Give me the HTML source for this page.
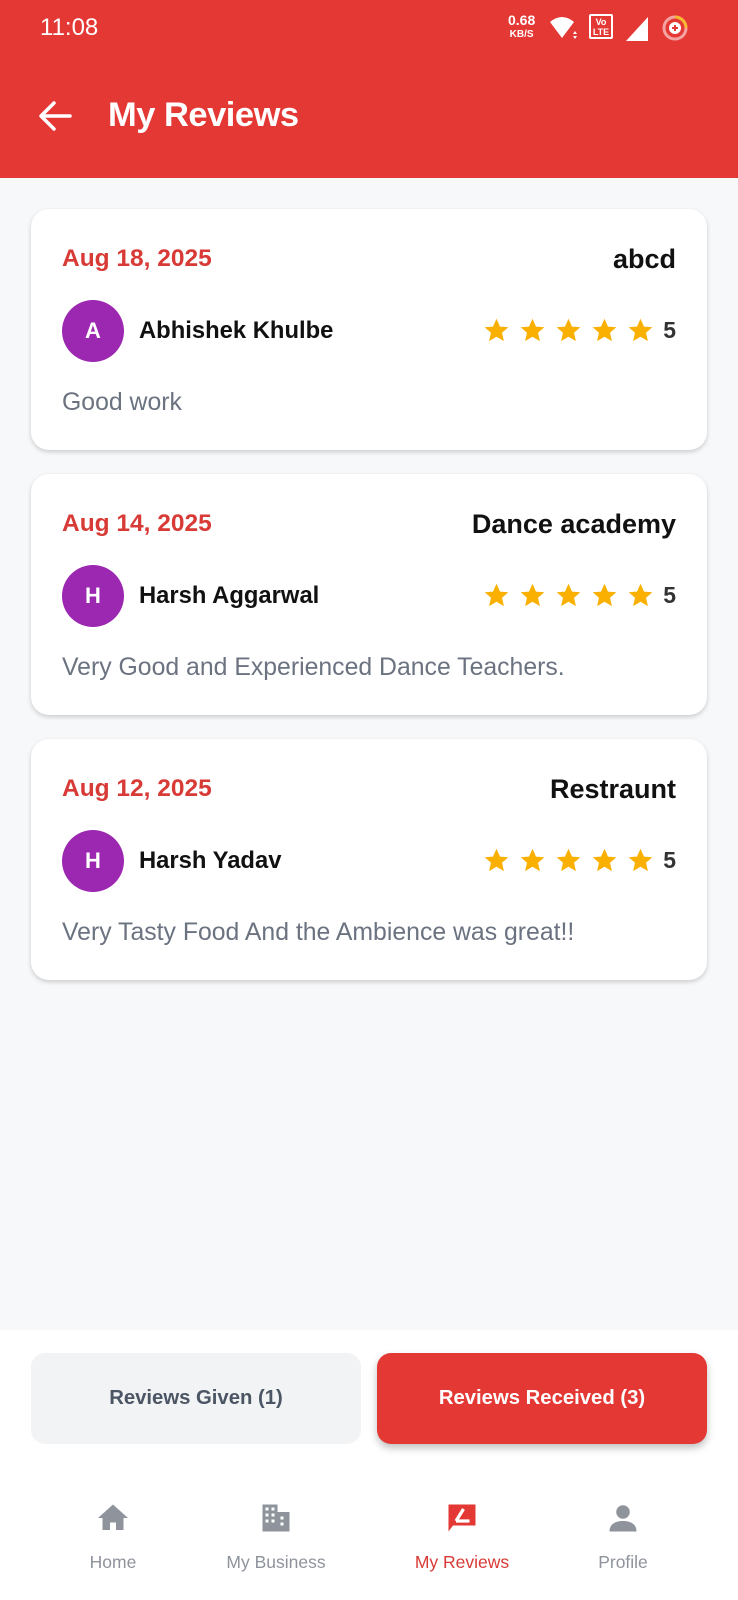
<!DOCTYPE html>
<html><head><style>
*{margin:0;padding:0;box-sizing:border-box}
body{width:738px;height:1600px;background:#f7f8fa;font-family:"Liberation Sans",sans-serif;position:relative;overflow:hidden}
.hdr{position:absolute;left:0;top:0;width:738px;height:178px;background:#e43835;color:#fff}
.card{position:absolute;left:31px;width:676px;height:241px;background:#fff;border-radius:18px;box-shadow:0 2px 5px rgba(0,0,0,.18)}
.date{position:absolute;left:31px;top:36px;font-size:24.5px;font-weight:bold;color:#d83a36}
.biz{position:absolute;right:31px;top:35px;font-size:27px;font-weight:bold;color:#111}
.av{position:absolute;left:31px;top:91px;width:62px;height:62px;border-radius:50%;background:#9c27b0;color:#fff;font-weight:bold;font-size:22px;text-align:center;line-height:62px}
.name{position:absolute;left:108px;top:108px;font-size:23.8px;font-weight:bold;color:#111}
.stars{position:absolute;right:31px;top:108px;display:flex;align-items:center;gap:9px}
.stars svg{width:27px;height:27px}
.stars span{font-size:23px;color:#333;font-weight:bold;margin-left:0}
.cmt{position:absolute;left:31px;top:180px;font-size:24.8px;color:#6b7280}
.bot{position:absolute;left:0;top:1330px;width:738px;height:270px;background:#fff}
.btn{position:absolute;top:23px;height:91px;width:330px;border-radius:14px;font-size:20.3px;font-weight:bold;text-align:center;line-height:91px}
.nav{position:absolute;top:1500px;width:140px;text-align:center;font-size:17.5px;color:#8e939c}
.nav svg{display:block;margin:0 auto 16px;width:36px;height:36px}
</style></head><body>
<div class="hdr">
<div style="position:absolute;left:40px;top:14px;font-size:24px;">11:08</div>
<div style="position:absolute;left:508px;top:14px;font-size:14px;font-weight:bold;line-height:12px;text-align:center">0.68<br><span style="font-size:10px">KB/S</span></div>
<svg style="position:absolute;left:548px;top:14px" width="32" height="28" viewBox="0 0 32 28"><path d="M2 8 Q14 -2 26 8 L14 24 Z" fill="#fff"/><path d="M27 17l2 3h-4zM27 25l2-3h-4z" fill="#fff"/></svg>
<div style="position:absolute;left:589px;top:14px;width:24px;height:25px;border:2px solid #fff;border-radius:2px;font-size:9px;font-weight:bold;line-height:10px;text-align:center;padding-top:1px">Vo<br>LTE</div>
<svg style="position:absolute;left:624px;top:14px" width="26" height="28"><path d="M2 27 L24 3 V27Z" fill="#fff"/></svg>
<svg style="position:absolute;left:660px;top:13px" width="30" height="30"><circle cx="15" cy="15" r="11" fill="none" stroke="#f3a4a2" stroke-width="3"/><path d="M15 4 A11 11 0 0 1 26 15" fill="none" stroke="#f7b731" stroke-width="3"/><circle cx="15" cy="15" r="6" fill="#fff"/><path d="M15 12v6M12 15h6" stroke="#e43835" stroke-width="2"/></svg>
<svg style="position:absolute;left:38px;top:100px" width="34" height="32" viewBox="0 0 34 32"><path d="M32 16H4M16 3L3 16l13 13" fill="none" stroke="#fff" stroke-width="3.5" stroke-linecap="round" stroke-linejoin="round"/></svg>
<div style="position:absolute;left:108px;top:96px;font-size:34.5px;font-weight:bold;letter-spacing:-0.5px">My Reviews</div>
</div>

<div class="card" style="top:209px">
<div class="date">Aug 18, 2025</div><div class="biz">abcd</div>
<div class="av">A</div><div class="name">Abhishek Khulbe</div>
<div class="stars"><svg viewBox="0 0 24 24"><path d="M12 1.5l3.1 7 7.4.6-5.6 4.9 1.7 7.4L12 17.5 5.4 21.4l1.7-7.4L1.5 9.1l7.4-.6z" fill="#f9b000"/></svg><svg viewBox="0 0 24 24"><path d="M12 1.5l3.1 7 7.4.6-5.6 4.9 1.7 7.4L12 17.5 5.4 21.4l1.7-7.4L1.5 9.1l7.4-.6z" fill="#f9b000"/></svg><svg viewBox="0 0 24 24"><path d="M12 1.5l3.1 7 7.4.6-5.6 4.9 1.7 7.4L12 17.5 5.4 21.4l1.7-7.4L1.5 9.1l7.4-.6z" fill="#f9b000"/></svg><svg viewBox="0 0 24 24"><path d="M12 1.5l3.1 7 7.4.6-5.6 4.9 1.7 7.4L12 17.5 5.4 21.4l1.7-7.4L1.5 9.1l7.4-.6z" fill="#f9b000"/></svg><svg viewBox="0 0 24 24"><path d="M12 1.5l3.1 7 7.4.6-5.6 4.9 1.7 7.4L12 17.5 5.4 21.4l1.7-7.4L1.5 9.1l7.4-.6z" fill="#f9b000"/></svg><span>5</span></div>
<div class="cmt">Good work</div>
</div>

<div class="card" style="top:474px">
<div class="date">Aug 14, 2025</div><div class="biz">Dance academy</div>
<div class="av">H</div><div class="name">Harsh Aggarwal</div>
<div class="stars"><svg viewBox="0 0 24 24"><path d="M12 1.5l3.1 7 7.4.6-5.6 4.9 1.7 7.4L12 17.5 5.4 21.4l1.7-7.4L1.5 9.1l7.4-.6z" fill="#f9b000"/></svg><svg viewBox="0 0 24 24"><path d="M12 1.5l3.1 7 7.4.6-5.6 4.9 1.7 7.4L12 17.5 5.4 21.4l1.7-7.4L1.5 9.1l7.4-.6z" fill="#f9b000"/></svg><svg viewBox="0 0 24 24"><path d="M12 1.5l3.1 7 7.4.6-5.6 4.9 1.7 7.4L12 17.5 5.4 21.4l1.7-7.4L1.5 9.1l7.4-.6z" fill="#f9b000"/></svg><svg viewBox="0 0 24 24"><path d="M12 1.5l3.1 7 7.4.6-5.6 4.9 1.7 7.4L12 17.5 5.4 21.4l1.7-7.4L1.5 9.1l7.4-.6z" fill="#f9b000"/></svg><svg viewBox="0 0 24 24"><path d="M12 1.5l3.1 7 7.4.6-5.6 4.9 1.7 7.4L12 17.5 5.4 21.4l1.7-7.4L1.5 9.1l7.4-.6z" fill="#f9b000"/></svg><span>5</span></div>
<div class="cmt">Very Good and Experienced Dance Teachers.</div>
</div>

<div class="card" style="top:739px">
<div class="date">Aug 12, 2025</div><div class="biz">Restraunt</div>
<div class="av">H</div><div class="name">Harsh Yadav</div>
<div class="stars"><svg viewBox="0 0 24 24"><path d="M12 1.5l3.1 7 7.4.6-5.6 4.9 1.7 7.4L12 17.5 5.4 21.4l1.7-7.4L1.5 9.1l7.4-.6z" fill="#f9b000"/></svg><svg viewBox="0 0 24 24"><path d="M12 1.5l3.1 7 7.4.6-5.6 4.9 1.7 7.4L12 17.5 5.4 21.4l1.7-7.4L1.5 9.1l7.4-.6z" fill="#f9b000"/></svg><svg viewBox="0 0 24 24"><path d="M12 1.5l3.1 7 7.4.6-5.6 4.9 1.7 7.4L12 17.5 5.4 21.4l1.7-7.4L1.5 9.1l7.4-.6z" fill="#f9b000"/></svg><svg viewBox="0 0 24 24"><path d="M12 1.5l3.1 7 7.4.6-5.6 4.9 1.7 7.4L12 17.5 5.4 21.4l1.7-7.4L1.5 9.1l7.4-.6z" fill="#f9b000"/></svg><svg viewBox="0 0 24 24"><path d="M12 1.5l3.1 7 7.4.6-5.6 4.9 1.7 7.4L12 17.5 5.4 21.4l1.7-7.4L1.5 9.1l7.4-.6z" fill="#f9b000"/></svg><span>5</span></div>
<div class="cmt">Very Tasty Food And the Ambience was great!!</div>
</div>

<div class="bot">
<div class="btn" style="left:31px;background:#f2f3f5;color:#4b5563">Reviews Given (1)</div>
<div class="btn" style="left:377px;background:#e43835;color:#fff;box-shadow:0 4px 8px rgba(0,0,0,.25)">Reviews Received (3)</div>
</div>

<div class="nav" style="left:43px"><svg viewBox="0 0 24 24"><path d="M12 3L2 12h3v8h5v-5h4v5h5v-8h3z" fill="#8e939c"/></svg>Home</div>
<div class="nav" style="left:206px"><svg viewBox="0 0 24 24"><path d="M3 3h10v18H3zM13 8h8v13h-8z" fill="#8e939c"/><g fill="#fff"><rect x="5" y="5" width="2" height="2"/><rect x="9" y="5" width="2" height="2"/><rect x="5" y="9" width="2" height="2"/><rect x="9" y="9" width="2" height="2"/><rect x="5" y="13" width="2" height="2"/><rect x="9" y="13" width="2" height="2"/><rect x="15" y="11" width="2" height="2"/><rect x="15" y="15" width="2" height="2"/></g></svg>My Business</div>
<div class="nav" style="left:392px;color:#d83a36"><svg viewBox="0 0 24 24"><path d="M3 3h18v14H6l-3 4z" fill="#e43835"/><path d="M8 14l5-8M8 14h9" stroke="#fff" stroke-width="2.2" fill="none"/></svg>My Reviews</div>
<div class="nav" style="left:553px"><svg viewBox="0 0 24 24"><circle cx="12" cy="8" r="4.5" fill="#8e939c"/><path d="M3 21c0-5 4-7 9-7s9 2 9 7z" fill="#8e939c"/></svg>Profile</div>
</body></html>
